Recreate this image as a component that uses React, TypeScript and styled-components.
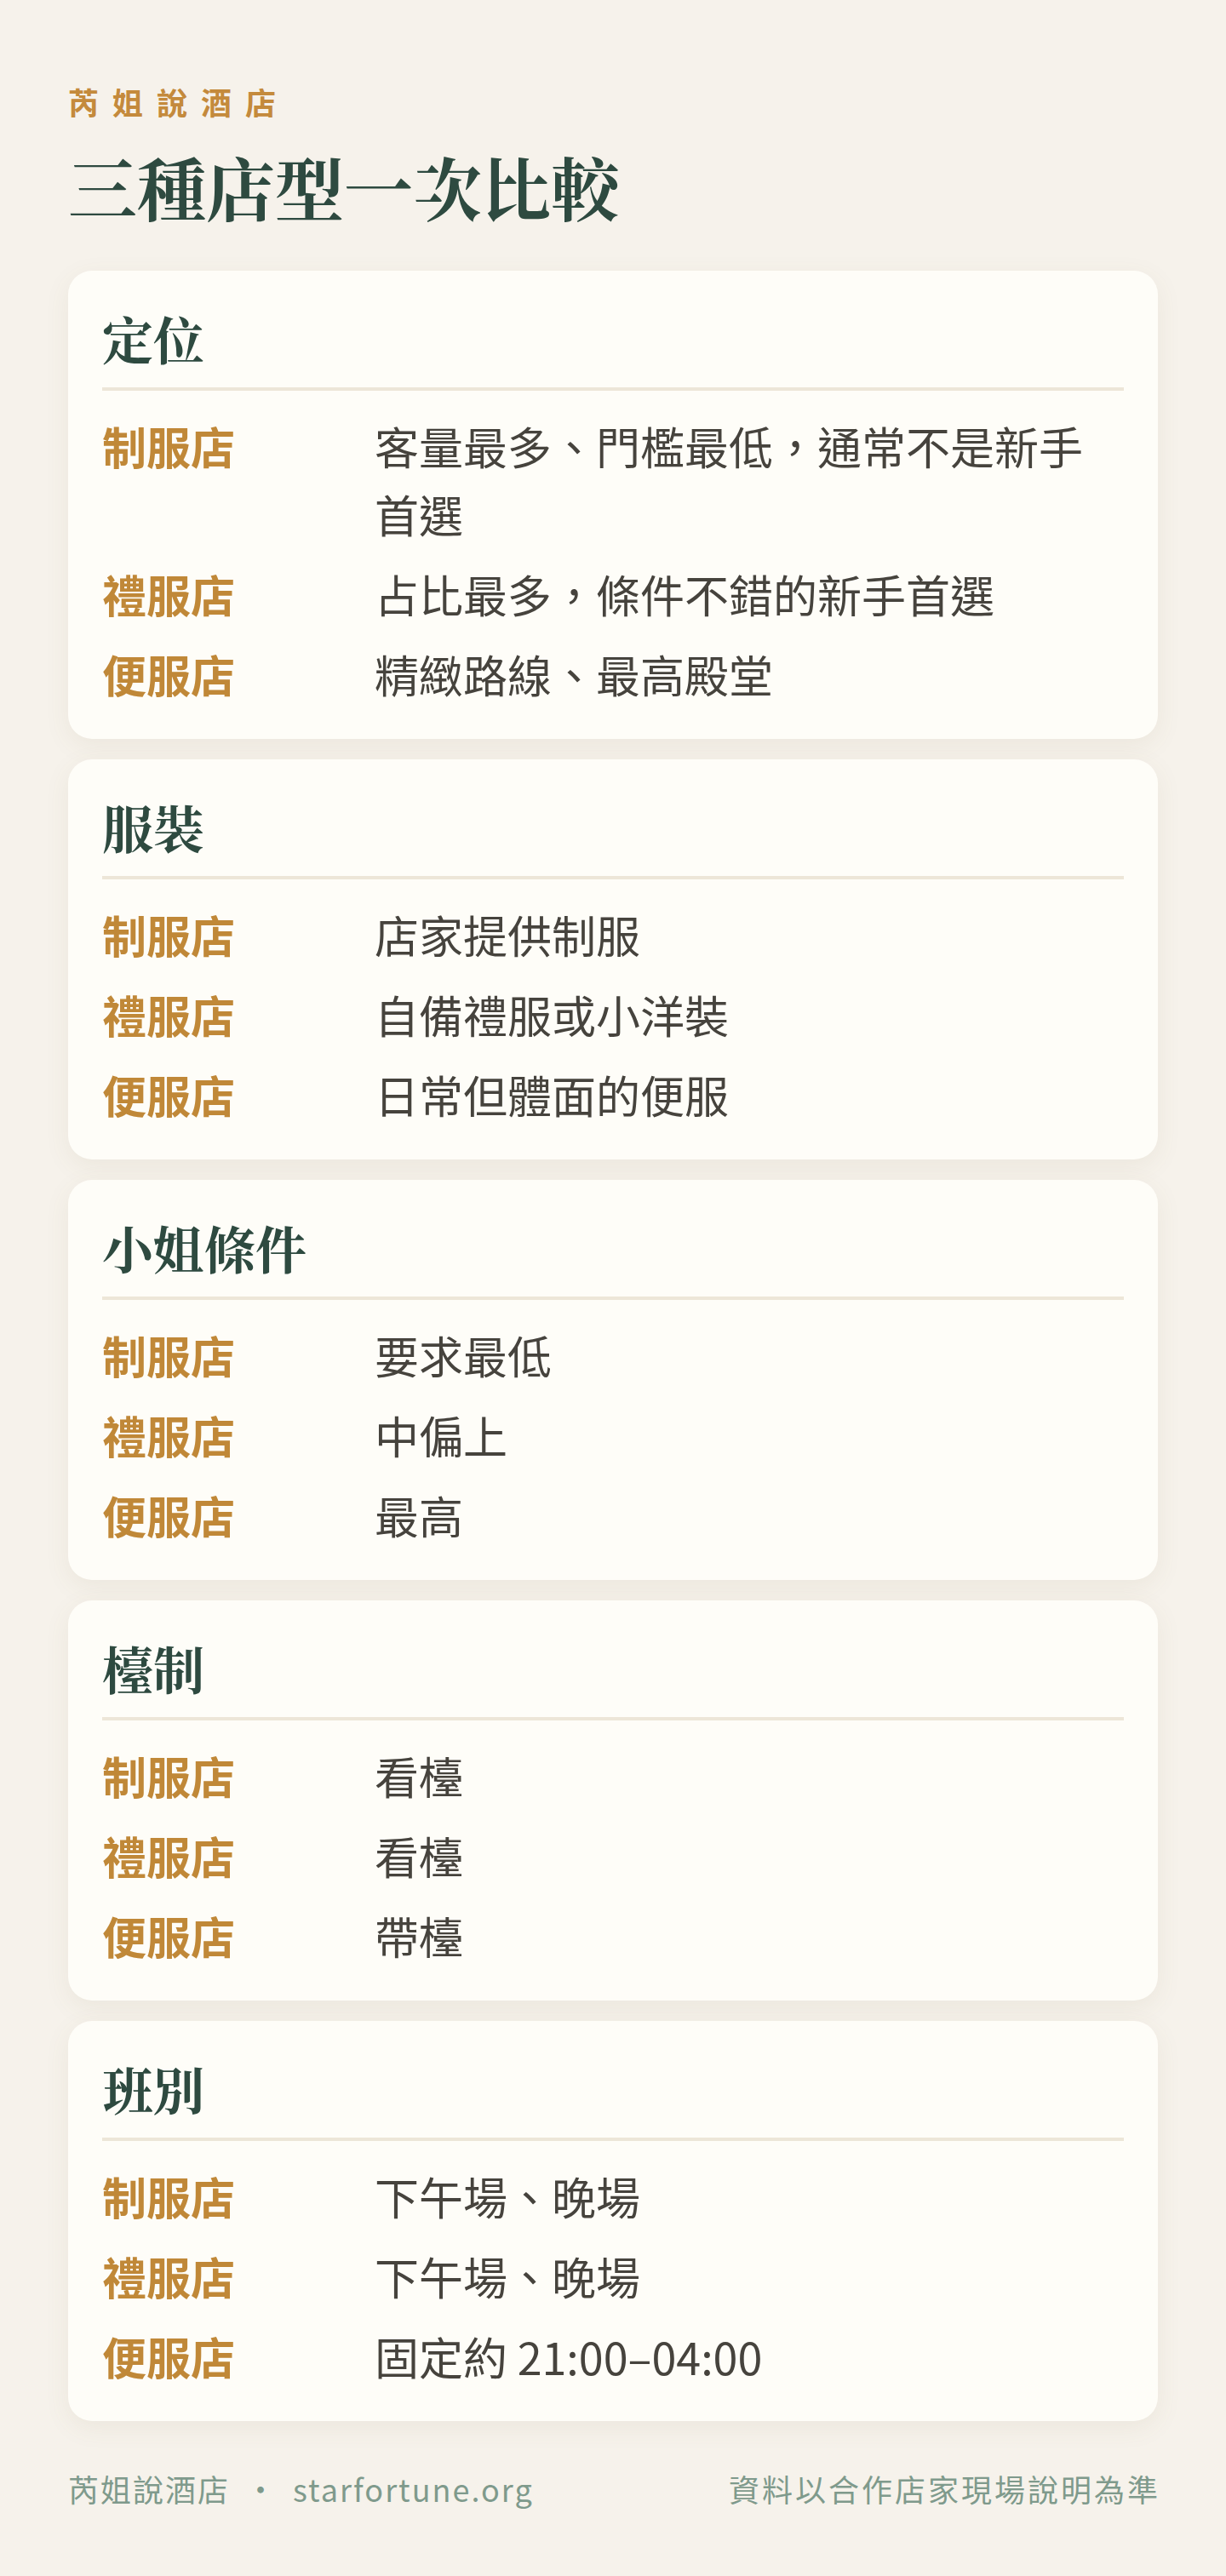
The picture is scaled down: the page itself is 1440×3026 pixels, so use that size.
import styled, { createGlobalStyle } from "styled-components";

const GlobalStyle = createGlobalStyle`
  html, body {
    margin: 0;
    padding: 0;
    background: #f6f2eb;
  }
  body {
    font-family: "Noto Sans CJK TC", "Noto Sans", sans-serif;
  }
`;

const SERIF = `"Noto Serif CJK TC", "Noto Serif TC", "Noto Sans CJK TC", serif`;

const Page = styled.div`
  width: 1440px;
  min-height: 3026px;
  box-sizing: border-box;
  padding: 94px 80px 0;
  background: #f6f2eb;
`;

const Brand = styled.div`
  font-size: 36px;
  line-height: 50px;
  font-weight: 700;
  letter-spacing: 16px;
  color: #c48a3c;
`;

const Title = styled.h1`
  margin: 24px 0 50px;
  font-family: ${SERIF};
  font-size: 81px;
  line-height: 100px;
  font-weight: 700;
  color: #2e4a40;
`;

const CardList = styled.div`
  display: flex;
  flex-direction: column;
  gap: 24px;
`;

const Card = styled.section`
  background: #fefdf8;
  border-radius: 28px;
  padding: 40px 40px 36px;
  box-shadow: 0 8px 30px rgba(120, 100, 70, 0.08);
`;

const CardTitle = styled.h2`
  margin: 0;
  padding-bottom: 19px;
  border-bottom: 4px solid #ede6d8;
  font-family: ${SERIF};
  font-size: 60px;
  line-height: 78px;
  font-weight: 700;
  color: #2e4a40;
`;

const Rows = styled.div`
  display: flex;
  flex-direction: column;
  gap: 14px;
  margin-top: 25px;
`;

const Row = styled.div`
  display: grid;
  grid-template-columns: 320px 1fr;
  font-size: 52px;
  line-height: 80px;
`;

const Label = styled.div`
  font-weight: 700;
  color: #c08838;
`;

const Value = styled.div`
  color: #46433d;
`;

const Footer = styled.footer`
  display: flex;
  justify-content: space-between;
  align-items: center;
  margin-top: 54px;
  font-size: 36px;
  line-height: 50px;
  color: #7f9a8c;
  letter-spacing: 2px;
`;

const Dot = styled.span`
  margin: 0 18px;
`;

const Note = styled.span`
  letter-spacing: 3px;
  margin-right: -3px;
`;

const sections = [
  {
    title: "定位",
    rows: [
      ["制服店", "客量最多、門檻最低，通常不是新手首選"],
      ["禮服店", "占比最多，條件不錯的新手首選"],
      ["便服店", "精緻路線、最高殿堂"],
    ],
  },
  {
    title: "服裝",
    rows: [
      ["制服店", "店家提供制服"],
      ["禮服店", "自備禮服或小洋裝"],
      ["便服店", "日常但體面的便服"],
    ],
  },
  {
    title: "小姐條件",
    rows: [
      ["制服店", "要求最低"],
      ["禮服店", "中偏上"],
      ["便服店", "最高"],
    ],
  },
  {
    title: "檯制",
    rows: [
      ["制服店", "看檯"],
      ["禮服店", "看檯"],
      ["便服店", "帶檯"],
    ],
  },
  {
    title: "班別",
    rows: [
      ["制服店", "下午場、晚場"],
      ["禮服店", "下午場、晚場"],
      ["便服店", "固定約 21:00–04:00"],
    ],
  },
];

export default function App() {
  return (
    <Page>
      <GlobalStyle />
      <Brand>芮姐說酒店</Brand>
      <Title>三種店型一次比較</Title>
      <CardList>
        {sections.map((s) => (
          <Card key={s.title}>
            <CardTitle>{s.title}</CardTitle>
            <Rows>
              {s.rows.map(([label, value]) => (
                <Row key={label}>
                  <Label>{label}</Label>
                  <Value>{value}</Value>
                </Row>
              ))}
            </Rows>
          </Card>
        ))}
      </CardList>
      <Footer>
        <span>
          芮姐說酒店<Dot>·</Dot>starfortune.org
        </span>
        <Note>資料以合作店家現場說明為準</Note>
      </Footer>
    </Page>
  );
}
